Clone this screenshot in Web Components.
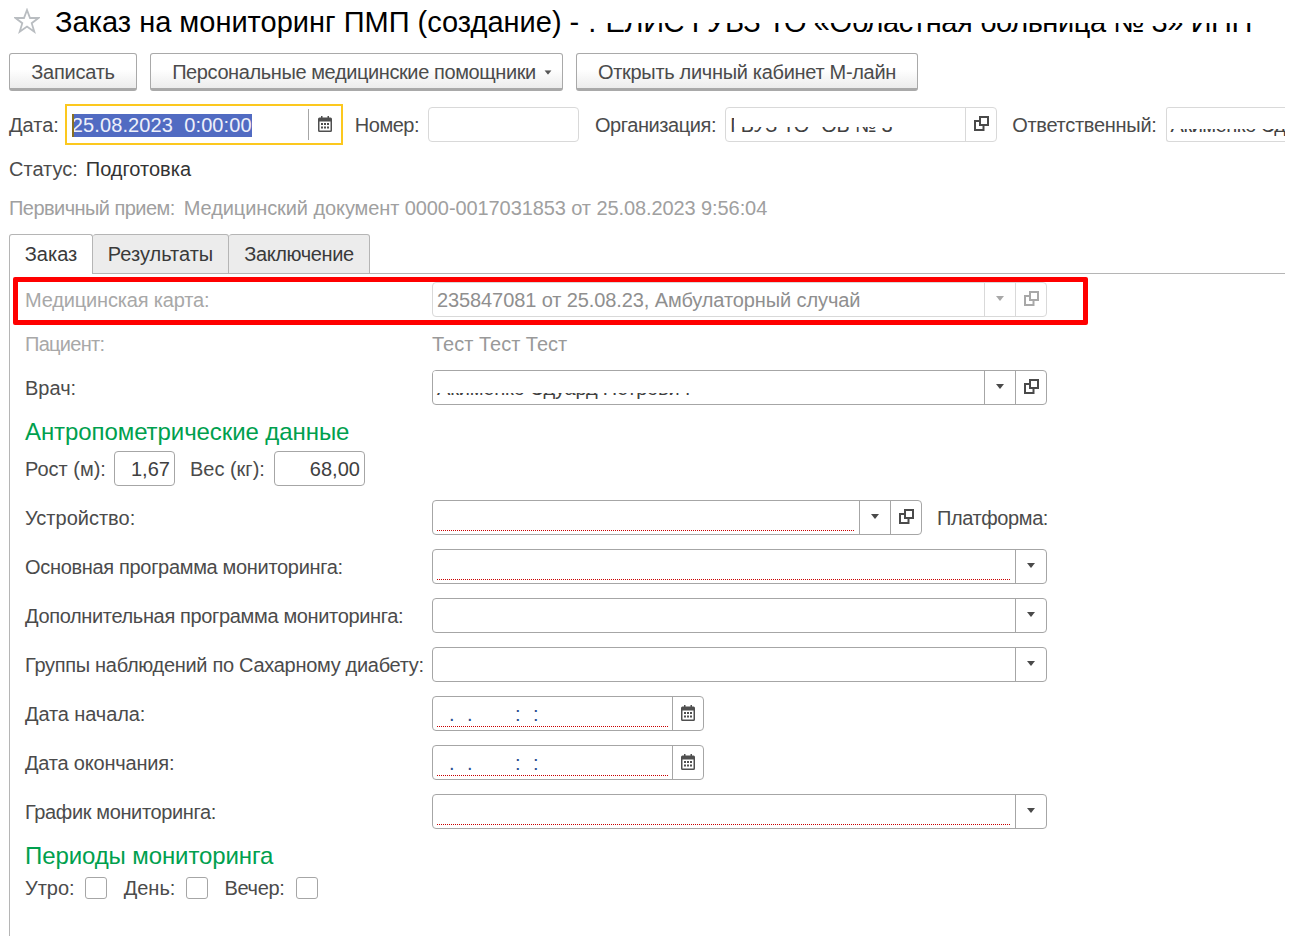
<!DOCTYPE html>
<html lang="ru"><head><meta charset="utf-8"><title>Заказ</title>
<style>
html,body{margin:0;padding:0;background:#fff;height:936px;overflow:hidden}
body{font:20px "Liberation Sans",Arial,sans-serif;color:#4b4b4b}
</style></head><body>
<x-form></x-form>
<template id="form-t"><style>
:host{display:block;width:1285px;height:936px;overflow:hidden;padding-left:9px;box-sizing:border-box}
.title{height:53px;display:flex;align-items:flex-start}
.cmd{display:flex;gap:13px;height:38px;margin-bottom:13px}
.head{display:flex;align-items:center;height:41px;white-space:nowrap}
.l{margin-right:9px;padding-top:2px}
.st{display:flex;height:24px;align-items:center;margin-top:12px;white-space:nowrap}
.pr{display:flex;height:24px;align-items:center;margin-top:15px;color:#a0a0a0;white-space:nowrap}
.tabs{display:flex;margin-top:14px;height:40px;box-sizing:border-box}
.tabs .rest{flex:1;border-bottom:1px solid #b5b5b5}
.body{border-left:1px solid #b5b5b5;height:664px;padding:8px 0 0 15px;box-sizing:content-box}
.grid{display:grid;grid-template-columns:407px 1fr;row-gap:9px;align-items:center;position:relative}
.anth{display:flex;align-items:center;height:35px;white-space:nowrap}
.rows{display:grid;grid-template-columns:407px 1fr;row-gap:14px;align-items:center;margin-top:14px}
.lab{white-space:nowrap;padding-top:2px}
.inl{display:flex;align-items:center;white-space:nowrap}
.dis{color:#a8a8a8}
.checks{display:flex;align-items:center;height:22px;margin-top:3px;white-space:nowrap}
.checks .l{padding-top:0;margin-right:11px}
</style>
<div class="title"><x-title>Заказ на мониторинг ПМП (создание) - </x-title></div>
<div class="cmd">
<x-btn style="width:128px;letter-spacing:-.25px">Записать</x-btn>
<x-btn style="width:413px;letter-spacing:-.4px" menu>Персональные медицинские помощники</x-btn>
<x-btn style="width:342px;letter-spacing:-.31px">Открыть личный кабинет М-лайн</x-btn>
</div>
<div class="head">
<span class="l" style="margin-right:6px">Дата:</span>
<x-field focused selected value="25.08.2023  0:00:00" btn="cal" style="width:278px;height:41px;letter-spacing:.1px"></x-field>
<span class="l" style="margin-left:12px;letter-spacing:-.5px">Номер:</span>
<x-field value="" light style="width:151px"></x-field>
<span class="l" style="margin-left:16px;letter-spacing:-.42px">Организация:</span>
<x-field value="ГБУЗ ТО &quot;ОБ № 3&quot;" redact="19" redact-left="8" light btn="open" style="width:272px;letter-spacing:-.2px"></x-field>
<span class="l" style="margin-left:15px;letter-spacing:-.28px">Ответственный:</span>
<x-field value="Акименко Эд" redact="21" light open-right style="width:119px;letter-spacing:-.5px"></x-field>
</div>
<div class="st"><span style="margin-right:8px">Статус:</span><span style="color:#333">Подготовка</span></div>
<div class="pr"><span style="margin-right:9px;letter-spacing:-.55px">Первичный прием:</span><span style="letter-spacing:-.09px">Медицинский документ 0000-0017031853 от 25.08.2023 9:56:04</span></div>
<div class="tabs">
<x-tab active style="width:84px">Заказ</x-tab>
<x-tab style="width:136px">Результаты</x-tab>
<x-tab style="width:141px;letter-spacing:-.4px">Заключение</x-tab>
<div class="rest"></div>
</div>
<div class="body">
<div class="grid">
<x-highlight></x-highlight>
<span class="lab dis" style="letter-spacing:-.17px">Медицинская карта:</span>
<x-field disabled value="235847081 от 25.08.23, Амбулаторный случай" btn="dd open" style="width:615px;letter-spacing:-.1px"></x-field>
<span class="lab dis" style="height:33px;line-height:33px;letter-spacing:-.7px">Пациент:</span>
<span class="dis" style="height:33px;line-height:33px;padding-top:2px;color:#999">Тест Тест Тест</span>
<span class="lab">Врач:</span>
<x-field value="Акименко Эдуард Петрович" redact="22" btn="dd open" style="width:615px;letter-spacing:-.2px"></x-field>
</div>
<x-group style="margin-top:9px">Антропометрические данные</x-group>
<div class="anth" style="margin-top:1px">
<span class="l" style="margin-right:8px">Рост (м):</span>
<x-field num value="1,67" style="width:61px"></x-field>
<span class="l" style="margin-left:15px">Вес (кг):</span>
<x-field num value="68,00" style="width:91px"></x-field>
</div>
<div class="rows">
<span class="lab">Устройство:</span>
<div class="inl"><x-field req value="" btn="dd open" style="width:490px"></x-field><span style="margin-left:15px;padding-top:2px;letter-spacing:-.4px">Платформа:</span></div>
<span class="lab" style="letter-spacing:-.32px">Основная программа мониторинга:</span>
<x-field req value="" btn="dd" style="width:615px"></x-field>
<span class="lab" style="letter-spacing:-.35px">Дополнительная программа мониторинга:</span>
<x-field value="" btn="dd" style="width:615px"></x-field>
<span class="lab" style="letter-spacing:-.3px">Группы наблюдений по Сахарному диабету:</span>
<x-field value="" btn="dd" style="width:615px"></x-field>
<span class="lab" style="letter-spacing:-.1px">Дата начала:</span>
<x-field req mask btn="cal" style="width:272px"></x-field>
<span class="lab" style="letter-spacing:-.2px">Дата окончания:</span>
<x-field req mask btn="cal" style="width:272px"></x-field>
<span class="lab" style="letter-spacing:-.37px">График мониторинга:</span>
<x-field req value="" btn="dd" style="width:615px"></x-field>
</div>
<x-group style="margin-top:9px;letter-spacing:-.1px">Периоды мониторинга</x-group>
<div class="checks">
<span class="l" style="margin-right:10px">Утро:</span><x-check></x-check>
<span class="l" style="margin-left:17px">День:</span><x-check></x-check>
<span class="l" style="margin-left:16px;letter-spacing:-.3px">Вечер:</span><x-check></x-check>
</div>
</div>
</template>
<script>
const sh=(el,html)=>{el.attachShadow({mode:'open'}).innerHTML=html};
const COPY='<svg width="15" height="15" viewBox="0 0 15 15"><path d="M6 5H1V14H9.500V9" fill="none" stroke="currentColor" stroke-width="2"/><rect x="6" y="1" width="8" height="8" fill="none" stroke="currentColor" stroke-width="2"/></svg>';
const ARROW='<svg width="8" height="5" viewBox="0 0 8 5"><path d="M0 0H8L4 5Z" fill="currentColor"/></svg>';
const CAL='<svg width="14" height="16" viewBox="0 0 14 16"><path d="M1.500 1.500H3V0H4.500V1.500H9.500V0H11V1.500H12.500Q14 1.500 14 3V14.500Q14 16 12.500 16H1.500Q0 16 0 14.500V3Q0 1.500 1.500 1.500Z" fill="#4f4f4f"/><rect x="1.500" y="5.500" width="11" height="9" fill="#fff"/><g fill="#4f4f4f"><rect x="3" y="7" width="2" height="2"/><rect x="6" y="7" width="2" height="2"/><rect x="9" y="7" width="2" height="2"/><rect x="3" y="10.500" width="2" height="2"/><rect x="6" y="10.500" width="2" height="2"/><rect x="9" y="10.500" width="2" height="2"/></g></svg>';
customElements.define('x-form',class extends HTMLElement{constructor(){super();this.attachShadow({mode:'open'}).appendChild(document.getElementById('form-t').content.cloneNode(true))}});
customElements.define('x-title',class extends HTMLElement{constructor(){super();sh(this,`<style>
:host{display:flex;align-items:flex-start;white-space:nowrap;position:relative;width:1270px;color:#000}
svg{margin:8px 15px 0 5px;flex:none}
.t{font-size:29px;line-height:44px}
.rest{position:relative;display:inline-block;letter-spacing:-.42px;margin-left:1px}
.dot{margin-right:2px}
.cover{position:absolute;left:0;right:-10px;top:0;height:23px;background:#fff}
</style><svg width="26" height="26" viewBox="0 0 26 26"><path d="M13 2L16 10H24.500L17.700 15.200L20.300 23.700L13 18.500L5.700 23.700L8.300 15.200L1.500 10H10Z" fill="none" stroke="#b9bdc1" stroke-width="1.800"/></svg><span class="t"><slot></slot><span class="rest"><span class="dot">.</span> ЕЛИС ГУБЗ ТО «Областная больница № 3» ИНН<span class="cover"></span></span></span>`)}});
customElements.define('x-btn',class extends HTMLElement{constructor(){super();const m=this.hasAttribute('menu');sh(this,`<style>
:host{display:flex;align-items:center;justify-content:center;box-sizing:border-box;height:38px;padding:2px 0 0 ${m?11:0}px;border:1px solid #a9a9a9;border-bottom:3px solid #a9a9a9;border-radius:3px;background:linear-gradient(#fff 0,#fff 45%,#ececec 100%);white-space:nowrap;color:#4b4b4b}
svg{margin-left:8px;color:#555;transform:scale(.9)}
</style><slot></slot>${m?ARROW:''}`)}});
customElements.define('x-tab',class extends HTMLElement{constructor(){super();const a=this.hasAttribute('active');sh(this,`<style>
:host{display:flex;align-items:center;justify-content:center;box-sizing:border-box;height:40px;white-space:nowrap;border:1px solid #b5b5b5;border-left-width:${a?1:0}px;border-bottom:${a?'0':'1px solid #b5b5b5'};border-radius:3px 3px 0 0;background:${a?'#fff':'#ececec'};color:#3a3a3a}
</style><slot></slot>`)}});
customElements.define('x-group',class extends HTMLElement{constructor(){super();sh(this,`<style>
:host{display:block;font-size:24px;line-height:36px;letter-spacing:-.08px;color:#00a04e;white-space:nowrap}
</style><slot></slot>`)}});
customElements.define('x-check',class extends HTMLElement{constructor(){super();sh(this,`<style>
:host{display:block;box-sizing:border-box;width:22px;height:22px;border:1px solid #a6a6a6;border-radius:3px;background:#fff}
</style>`)}});
customElements.define('x-highlight',class extends HTMLElement{constructor(){super();sh(this,`<style>
:host{position:absolute;left:-12px;top:-5px;width:1075px;height:48px;box-sizing:border-box;border:5px solid #f00;border-radius:2px;pointer-events:none}
</style>`)}});
customElements.define('x-field',class extends HTMLElement{constructor(){super();
const g=n=>this.hasAttribute(n),dis=g('disabled'),foc=g('focused'),light=g('light');
const v=this.getAttribute('value')||'';
const border=foc?'#fcc81e':dis||light?'#d9d9d9':'#a6a6a6';
const fg=dis?'#8f8f8f':'#404040';
const btns=(this.getAttribute('btn')||'').split(' ').filter(Boolean).map(b=>{
 const w=b==='cal'?(foc?33:31):31;
 const ic=b==='dd'?ARROW:b==='open'?COPY:CAL;
 return `<span class="b ${foc?'fb':''}" style="width:${w}px"><span class="ic">${ic}</span></span>`}).join('');
let txt=`<span class="v">${v}</span>`;
if(g('selected'))txt=`<span class="caret"></span><span class="sel">${v}</span>`;
if(g('mask'))txt=`<span class="mk" style="width:18px">.</span><span class="mk" style="width:48px">.</span><span class="mk" style="width:18px">:</span><span class="mk">:</span>`;
const cover=g('redact')?`<span class="cover" style="height:${this.getAttribute('redact')}px;left:${this.getAttribute('redact-left')||0}px"></span>`:'';
sh(this,`<style>
:host{display:flex;box-sizing:border-box;height:35px;border:${foc?2:1}px solid ${border};${g('open-right')?'border-right:0;border-radius:3px 0 0 3px;':foc?'':'border-radius:4px;'}background:#fff;flex:none;color:${fg};white-space:pre;overflow:hidden}
.m{flex:1;min-width:0;position:relative;display:flex;align-items:center;padding:2px ${g('open-right')?0:4}px 0 ${foc?5:g('mask')?16:4}px;justify-content:${g('num')?'flex-end':'flex-start'};overflow:hidden}
.sel{background:#516bc2;color:#eef0fa;line-height:23px}
.caret{width:2px;height:23px;background:#8a7020;margin-right:-2px;position:relative;z-index:1}
.req{position:absolute;left:4px;right:4px;bottom:3px;height:1px;background:repeating-linear-gradient(90deg,#c80000 0 1px,transparent 1px 2px)}
.cover{position:absolute;right:0;top:0;background:#fff}
.mk{display:inline-block;color:#2a4f90}
.b{flex:none;display:flex;align-items:center;justify-content:center;border-left:1px solid ${foc?'#a6a6a6':dis||light?'#d9d9d9':'#a6a6a6'};color:${dis?'#a8a8a8':'#4a4a4a'};box-sizing:border-box}
.ic{display:flex;margin-bottom:2px}
.fb{margin:3px 0}
</style><span class="m">${txt}${g('req')?'<span class="req"></span>':''}${cover}</span>${btns}`)}});
</script>
</body></html>
